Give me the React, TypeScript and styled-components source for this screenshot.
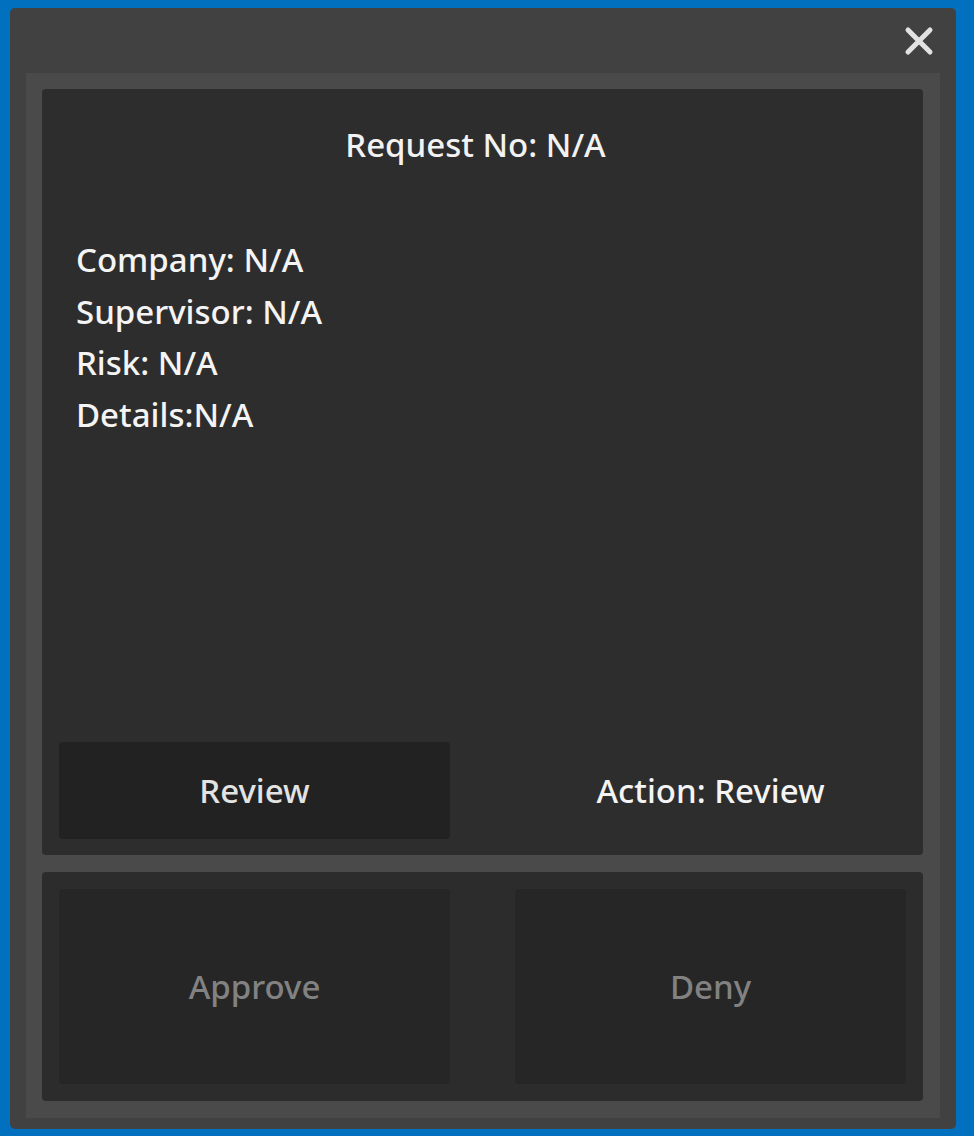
import React from "react";
import styled, { createGlobalStyle } from "styled-components";

const Global = createGlobalStyle`
  html, body {
    margin: 0;
    padding: 0;
    background: #0070bf;
  }
  body {
    font-family: "Noto Sans", "Open Sans", sans-serif;
  }
`;

const Page = styled.div`
  width: 974px;
  height: 1136px;
  box-sizing: border-box;
  padding: 8px 18px 7px 10px;
  display: flex;
`;

const Window = styled.div`
  flex: 1;
  display: flex;
  flex-direction: column;
  background: #414141;
  border-radius: 5px;
  padding: 0 16px 11px 16px;
`;

const Header = styled.div`
  height: 65px;
  display: flex;
  align-items: center;
  justify-content: flex-end;
  padding-right: 6px;
`;

const CloseButton = styled.button`
  width: 30px;
  height: 30px;
  padding: 0;
  border: none;
  background: transparent;
  display: flex;
  align-items: center;
  justify-content: center;
  cursor: pointer;
`;

const Body = styled.div`
  flex: 1;
  background: #4a4a4a;
  padding: 16px 17px 17px 16px;
  display: flex;
  flex-direction: column;
  gap: 17px;
`;

const InfoCard = styled.div`
  flex: 1;
  background: #2d2d2d;
  border-radius: 4px;
  padding: 30px 17px 16px 17px;
  display: flex;
  flex-direction: column;
`;

const Title = styled.div`
  font-size: 33px;
  font-weight: 500;
  line-height: 52px;
  color: #f2f2f2;
  text-align: center;
  margin-left: -14px;
`;

const Fields = styled.div`
  margin-top: 63px;
  padding-left: 17px;
  display: flex;
  flex-direction: column;
`;

const Field = styled.div`
  font-size: 33px;
  font-weight: 500;
  line-height: 51.7px;
  color: #f4f4f4;
`;

const Spacer = styled.div`
  flex: 1;
`;

const ActionRow = styled.div`
  display: grid;
  grid-template-columns: 1fr 1fr;
  column-gap: 65px;
  height: 97px;
`;

const Button = styled.button<{ $tone: "review" | "muted" }>`
  border: none;
  border-radius: 4px;
  background: ${(p) => (p.$tone === "review" ? "#222222" : "#262626")};
  color: ${(p) => (p.$tone === "review" ? "#e3e3e3" : "#828282")};
  font-family: "Noto Sans", "Open Sans", sans-serif;
  font-size: 33px;
  font-weight: 500;
  display: flex;
  align-items: center;
  justify-content: center;
  padding: 0;
`;

const ActionLabel = styled.div`
  display: flex;
  align-items: center;
  justify-content: center;
  font-size: 33px;
  font-weight: 500;
  color: #f4f4f4;
`;

const DecisionCard = styled.div`
  height: 229px;
  box-sizing: border-box;
  background: #2c2c2c;
  border-radius: 4px;
  padding: 17px;
  display: grid;
  grid-template-columns: 1fr 1fr;
  column-gap: 65px;
`;

const CloseIcon = () => (
  <svg width="30" height="30" viewBox="0 0 30 30">
    <path
      d="M4 4 L26 26 M26 4 L4 26"
      stroke="#e2e2e2"
      strokeWidth="5"
      strokeLinecap="round"
      fill="none"
    />
  </svg>
);

export default function App() {
  return (
    <>
      <Global />
      <Page>
        <Window>
          <Header>
            <CloseButton aria-label="Close">
              <CloseIcon />
            </CloseButton>
          </Header>
          <Body>
            <InfoCard>
              <Title>Request No: N/A</Title>
              <Fields>
                <Field>Company: N/A</Field>
                <Field>Supervisor: N/A</Field>
                <Field>Risk: N/A</Field>
                <Field>Details:N/A</Field>
              </Fields>
              <Spacer />
              <ActionRow>
                <Button $tone="review">Review</Button>
                <ActionLabel>Action: Review</ActionLabel>
              </ActionRow>
            </InfoCard>
            <DecisionCard>
              <Button $tone="muted">Approve</Button>
              <Button $tone="muted">Deny</Button>
            </DecisionCard>
          </Body>
        </Window>
      </Page>
    </>
  );
}
